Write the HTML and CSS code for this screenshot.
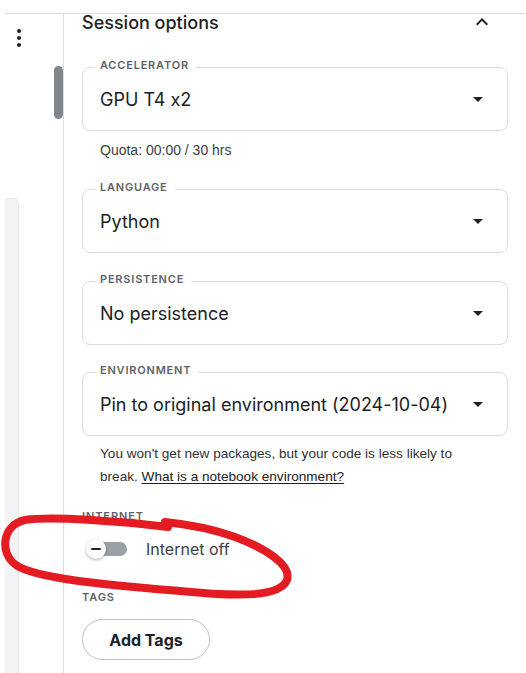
FILE: index.html
```html
<!DOCTYPE html>
<html lang="en">
<head>
<meta charset="utf-8">
<title>Session options</title>
<link rel="stylesheet" href="styles.css">
</head>
<body>
<div class="app">
  <aside class="rail">
    <svg class="kebab" width="8" height="20" viewBox="0 0 8 20" aria-hidden="true">
      <circle cx="4" cy="3" r="2"/>
      <circle cx="4" cy="10" r="2"/>
      <circle cx="4" cy="17" r="2"/>
    </svg>
    <div class="thumb"></div>
    <div class="side-panel"></div>
  </aside>

  <main class="main">
    <header class="head">
      <h2 class="title">Session options</h2>
      <svg class="chev" width="24" height="24" viewBox="0 0 24 24" aria-hidden="true"><path d="M12 8l-6 6 1.41 1.41L12 10.83l4.59 4.58L18 14z"/></svg>
    </header>

    <div class="field f-acc">
      <span class="label">ACCELERATOR</span>
      <span class="value">GPU T4 x2</span>
      <svg class="drop" width="24" height="24" viewBox="0 0 24 24" aria-hidden="true"><path d="M7 10l5 5 5-5z"/></svg>
    </div>
    <p class="quota">Quota: 00:00 / 30 hrs</p>

    <div class="field f-lang">
      <span class="label">LANGUAGE</span>
      <span class="value">Python</span>
      <svg class="drop" width="24" height="24" viewBox="0 0 24 24" aria-hidden="true"><path d="M7 10l5 5 5-5z"/></svg>
    </div>

    <div class="field f-pers">
      <span class="label">PERSISTENCE</span>
      <span class="value">No persistence</span>
      <svg class="drop" width="24" height="24" viewBox="0 0 24 24" aria-hidden="true"><path d="M7 10l5 5 5-5z"/></svg>
    </div>

    <div class="field f-env">
      <span class="label">ENVIRONMENT</span>
      <span class="value">Pin to original environment (2024-10-04)</span>
      <svg class="drop" width="24" height="24" viewBox="0 0 24 24" aria-hidden="true"><path d="M7 10l5 5 5-5z"/></svg>
    </div>
    <p class="helper">You won't get new packages, but your code is less likely to break. <a href="#">What is a notebook environment?</a></p>

    <div class="section-label l-internet">INTERNET</div>
    <div class="toggle-row">
      <div class="switch">
        <span class="track"></span>
        <span class="knob"><span class="minus"></span></span>
      </div>
      <span class="toggle-text">Internet off</span>
    </div>

    <div class="section-label l-tags">TAGS</div>
    <button class="btn" type="button">Add Tags</button>
  </main>
</div>

<svg class="annot" width="526" height="673" viewBox="0 0 526 673" aria-hidden="true">
  <path d="M168 527 C120 521, 50 516, 25 520 C2 525, -1 553, 16 565 C36 579, 110 585, 180 591 C240 597, 280 597, 287 580 C292 565, 265 548, 235 537 C210 528, 185 524, 165 522" />
</svg>
</body>
</html>
```

FILE: styles.css
```css
html, body {
  margin: 0;
  padding: 0;
  background: #ffffff;
  overflow: hidden;
}

body {
  font-family: Inter, "Noto Sans", sans-serif;
  font-feature-settings: "calt" 0;
  color: #202124;
}

.app {
  margin: 13px 0 0 5px;
  border-top: 1px solid #dadce0;
  display: flex;
  height: 659px;
}

/* left rail */
.rail {
  width: 58px;
  flex: none;
  display: flex;
  flex-direction: column;
}

.kebab {
  margin: 14px 0 0 10px;
  fill: #202124;
  display: block;
}

.thumb {
  align-self: flex-end;
  width: 9px;
  height: 53px;
  margin-top: 18px;
  border-radius: 5px;
  background: #80868b;
}

.side-panel {
  width: 13px;
  flex: 1;
  margin-top: 79px;
  background: #f1f3f4;
  border-right: 1px solid #e3e5e8;
  border-top: 1px solid #e8eaed;
  border-top-right-radius: 6px;
}

/* main column */
.main {
  flex: 1;
  border-left: 1px solid #dadce0;
  padding: 0 18px;
  display: flex;
  flex-direction: column;
  align-items: flex-start;
}

.head {
  align-self: stretch;
  display: flex;
  align-items: center;
  justify-content: space-between;
  height: 18px;
}

.title {
  margin: 0;
  font-size: 18px;
  line-height: 18px;
  font-weight: 500;
  color: #202124;
}

.chev {
  fill: #202124;
  margin-right: 14px;
  margin-bottom: 3px;
}

.field {
  align-self: stretch;
  position: relative;
  box-sizing: border-box;
  height: 64px;
  border: 1px solid #dadce0;
  border-radius: 8px;
  display: flex;
  align-items: center;
  justify-content: space-between;
  padding: 0 17px 0 17px;
}

.f-acc { margin-top: 35px; }
.f-lang { margin-top: 29px; }
.f-pers { margin-top: 28px; }
.f-env { margin-top: 27px; }

.label {
  position: absolute;
  top: -9px;
  left: 12px;
  padding: 0 7px 0 5px;
  background: #ffffff;
  font-size: 11px;
  line-height: 12px;
  font-weight: 600;
  letter-spacing: 0.8px;
  color: #5f6368;
}

.value {
  font-size: 18px;
  font-weight: 400;
  color: #202124;
  white-space: nowrap;
  font-feature-settings: "calt" 0;
}

.drop {
  fill: #202124;
  flex: none;
}

.quota {
  margin: 9px 0 0 0;
  padding-left: 18px;
  font-family: "Liberation Sans", Arial, sans-serif;
  font-size: 14px;
  line-height: 20px;
  color: #3c4043;
}

.helper {
  margin: 6px 0 0 0;
  padding-left: 18px;
  max-width: 380px;
  font-family: "Liberation Sans", Arial, sans-serif;
  font-size: 13.6px;
  line-height: 23px;
  color: #303134;
}

.helper a {
  color: #202124;
  text-decoration: underline;
  text-underline-offset: 2px;
}

.section-label {
  font-size: 11px;
  line-height: 16px;
  font-weight: 600;
  letter-spacing: 0.9px;
  color: #5f6368;
}

.l-internet { margin-top: 20px; }
.l-tags { margin-top: 28px; }

.toggle-row {
  margin-top: 13px;
  height: 24px;
  display: flex;
  align-items: center;
  padding-left: 4px;
}

.switch {
  position: relative;
  width: 41px;
  height: 20px;
  flex: none;
}

.track {
  position: absolute;
  left: 8px;
  right: 0;
  top: 3px;
  height: 14px;
  border-radius: 7px;
  background: #9aa0a6;
}

.knob {
  position: absolute;
  left: 0;
  top: 0;
  width: 20px;
  height: 20px;
  border-radius: 50%;
  background: #ffffff;
  box-shadow: 0 1px 3px rgba(60, 64, 67, 0.45);
  display: flex;
  align-items: center;
  justify-content: center;
}

.minus {
  width: 10px;
  height: 2px;
  background: #202124;
  border-radius: 1px;
}

.toggle-text {
  margin-left: 19px;
  font-size: 16px;
  color: #3c4043;
}

.btn {
  margin-top: 14px;
  box-sizing: border-box;
  width: 128px;
  height: 41px;
  border: 1px solid #bdc1c6;
  border-radius: 21px;
  background: #ffffff;
  font-family: Inter, "Noto Sans", sans-serif;
  font-size: 16px;
  font-weight: 700;
  color: #202124;
  padding: 0;
}

/* hand-drawn annotation overlay */
.annot {
  position: absolute;
  left: 0;
  top: 0;
  pointer-events: none;
}

.annot path {
  fill: none;
  stroke: #e31c23;
  stroke-width: 8;
  stroke-linecap: round;
  stroke-linejoin: round;
}
```
